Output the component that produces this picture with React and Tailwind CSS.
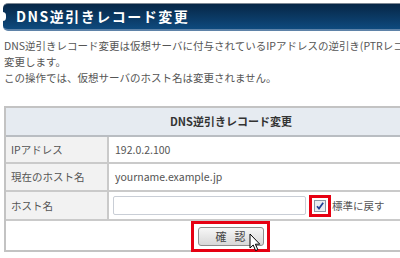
export default function App() {
  return (
    <div className="relative h-[258px] w-[400px] overflow-hidden bg-white font-['Noto_Sans_CJK_JP',sans-serif]">
      {/* Title bar */}
      <div className="pt-[3px] pl-[3px]">
        <div className="relative flex h-[28px] w-[420px] items-center rounded-l-[5px] border-t border-b-2 border-t-[#7d8894] border-b-[#5f83a8] bg-gradient-to-b from-[#072747] to-[#0e4a7e] pl-[13px]">
          <span className="absolute left-[-4px] top-[8px] h-[9px] w-[7px] rounded-full bg-white" />
          <span className="text-[14px] font-bold tracking-[1.5px] text-white">DNS逆引きレコード変更</span>
        </div>
      </div>

      {/* Description */}
      <div className="mt-[7px] pl-[4px] text-[10.5px] leading-[16px] text-[#555] whitespace-nowrap">
        <p>DNS逆引きレコード変更は仮想サーバに付与されているIPアドレスの逆引き(PTRレコード)を</p>
        <p>変更します。</p>
        <p>この操作では、仮想サーバのホスト名は変更されません。</p>
      </div>

      {/* Form table */}
      <div className="ml-[4px] mt-[20px] w-[452px] border-l-2 border-t-2 border-[#c3c3c3] text-[10.5px] text-[#555]">
        <div className="flex h-[29px] items-center justify-center border-b-2 border-[#b9bdc2] bg-[#e6ebf1] text-[11px] font-bold text-[#333]">
          DNS逆引きレコード変更
        </div>
        <div className="flex h-[27px] border-b-2 border-[#cacaca]">
          <div className="flex w-[103px] items-center border-r-2 border-[#cacaca] bg-[#f2f2f2] pl-[5px]">IPアドレス</div>
          <div className="flex items-center pl-[6px]">192.0.2.100</div>
        </div>
        <div className="flex h-[28px] border-b-2 border-[#cacaca]">
          <div className="flex w-[103px] items-center border-r-2 border-[#cacaca] bg-[#f2f2f2] pl-[5px]">現在のホスト名</div>
          <div className="flex items-center pl-[6px]">yourname.example.jp</div>
        </div>
        <div className="flex h-[29px] border-b-2 border-[#cacaca]">
          <div className="flex w-[103px] items-center border-r-2 border-[#cacaca] bg-[#f2f2f2] pl-[5px]">ホスト名</div>
          <div className="flex items-center pl-[4px]">
            <input className="h-[19px] w-[193px] rounded-[2px] border border-[#c9ced6] bg-white outline-none" />
            <div className="ml-[3px] flex h-[22px] w-[22px] items-center justify-center border-[3px] border-[#e60012]">
              <svg width="12" height="12" viewBox="0 0 12 12">
                <rect x="0.5" y="0.5" width="11" height="11" fill="#e9edf2" stroke="#8d97a3" />
                <path d="M3 6.2 L5 8.6 L9.2 2.8" fill="none" stroke="#1f3f96" strokeWidth="1.7" />
              </svg>
            </div>
            <span className="ml-[1px]">標準に戻す</span>
          </div>
        </div>
        <div className="flex h-[31px] border-b-2 border-[#c3c3c3] pl-[185px] pt-[-1px]">
          <div className="flex h-[31px] w-[79px] items-center justify-center border-[3px] border-[#e60012]">
            <button className="flex h-[19px] w-[66px] items-center justify-center rounded-[3px] border border-[#8e8e8e] bg-gradient-to-b from-[#f7f7f7] to-[#d8d8d8] text-[11px] tracking-[8px] pl-[8px] text-[#444]">
              確認
            </button>
          </div>
        </div>
      </div>

      {/* Mouse cursor over the button */}
      <svg className="absolute left-[249px] top-[233px]" width="12" height="19" viewBox="0 0 12 19">
        <path d="M1 1 L1 15 L4.2 12 L6.6 17.6 L8.8 16.6 L6.4 11.2 L10.8 11.2 Z" fill="#fff" stroke="#000" strokeWidth="1" strokeLinejoin="round" />
      </svg>
    </div>
  );
}
